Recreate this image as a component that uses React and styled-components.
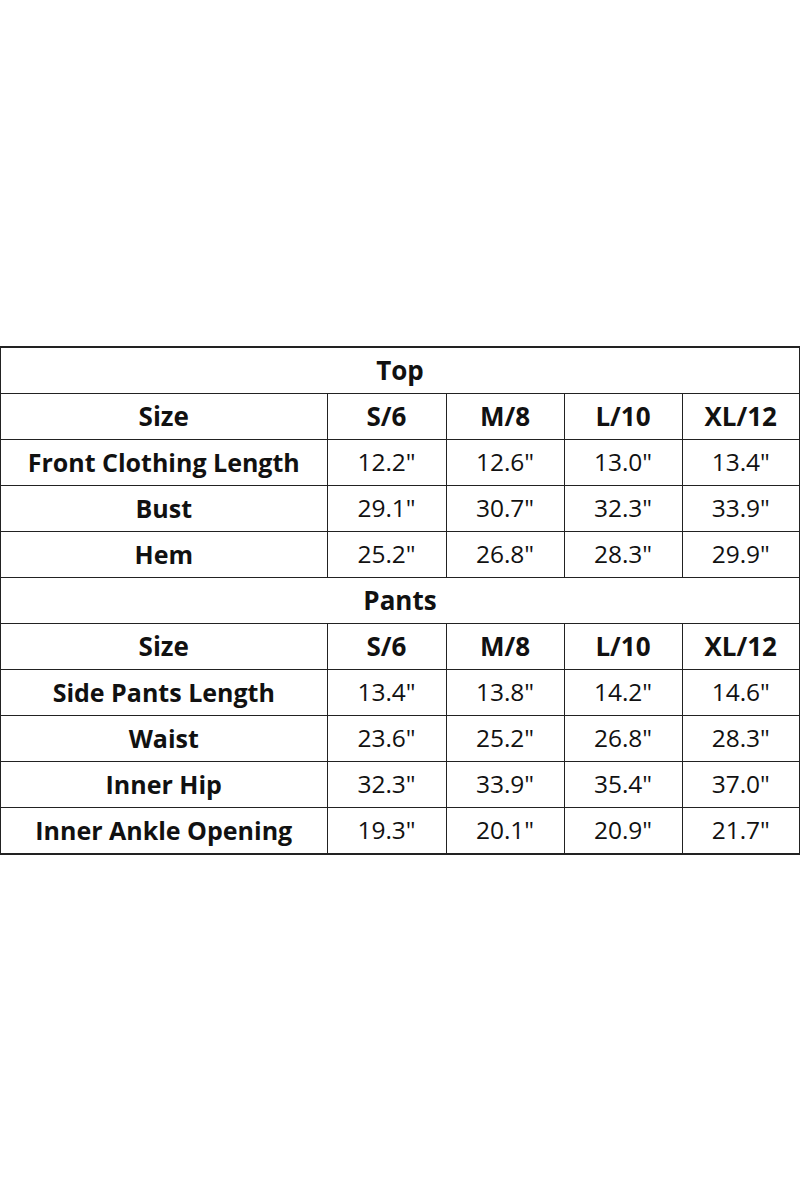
import React from "react";
import styled, { createGlobalStyle } from "styled-components";

const GlobalStyle = createGlobalStyle`
  html, body {
    margin: 0;
    padding: 0;
    background: #ffffff;
  }
  body {
    font-family: "Open Sans", "DejaVu Sans", sans-serif;
    color: #111;
  }
`;

const Page = styled.div`
  width: 800px;
  min-height: 1200px;
  display: flex;
  align-items: center;
  justify-content: center;
`;

const Table = styled.table`
  width: 800px;
  border-collapse: collapse;
  table-layout: fixed;
  border: 2px solid #222;
`;

const Col = styled.col`
  width: ${(p) => p.$w}px;
`;

const Cell = styled.td`
  height: 45px;
  padding: 0;
  border: 1.5px solid #222;
  text-align: center;
  vertical-align: middle;
  font-size: ${(p) => (p.$head ? "26px" : p.$bold ? "25px" : "24.5px")};
  font-weight: ${(p) => (p.$bold || p.$head ? 700 : 400)};
  color: #111;
  line-height: 1;
`;

const Title = styled(Cell)`
  font-size: 26px;
`;

const sections = [
  {
    title: "Top",
    rows: [
      ["Front Clothing Length", "12.2\"", "12.6\"", "13.0\"", "13.4\""],
      ["Bust", "29.1\"", "30.7\"", "32.3\"", "33.9\""],
      ["Hem", "25.2\"", "26.8\"", "28.3\"", "29.9\""],
    ],
  },
  {
    title: "Pants",
    rows: [
      ["Side Pants Length", "13.4\"", "13.8\"", "14.2\"", "14.6\""],
      ["Waist", "23.6\"", "25.2\"", "26.8\"", "28.3\""],
      ["Inner Hip", "32.3\"", "33.9\"", "35.4\"", "37.0\""],
      ["Inner Ankle Opening", "19.3\"", "20.1\"", "20.9\"", "21.7\""],
    ],
  },
];

const sizes = ["Size", "S/6", "M/8", "L/10", "XL/12"];
const widths = [327, 119, 118, 118, 118];

export default function App() {
  return (
    <>
      <GlobalStyle />
      <Page>
        <Table>
          <colgroup>
            {widths.map((w, i) => (
              <Col $w={w} key={i} />
            ))}
          </colgroup>
          <tbody>
            {sections.map((s) => (
              <React.Fragment key={s.title}>
                <tr>
                  <Title $head colSpan={5}>
                    {s.title}
                  </Title>
                </tr>
                <tr>
                  {sizes.map((z) => (
                    <Cell $head key={z}>
                      {z}
                    </Cell>
                  ))}
                </tr>
                {s.rows.map((r) => (
                  <tr key={r[0]}>
                    {r.map((v, i) => (
                      <Cell $bold={i === 0} key={i}>
                        {v}
                      </Cell>
                    ))}
                  </tr>
                ))}
              </React.Fragment>
            ))}
          </tbody>
        </Table>
      </Page>
    </>
  );
}
